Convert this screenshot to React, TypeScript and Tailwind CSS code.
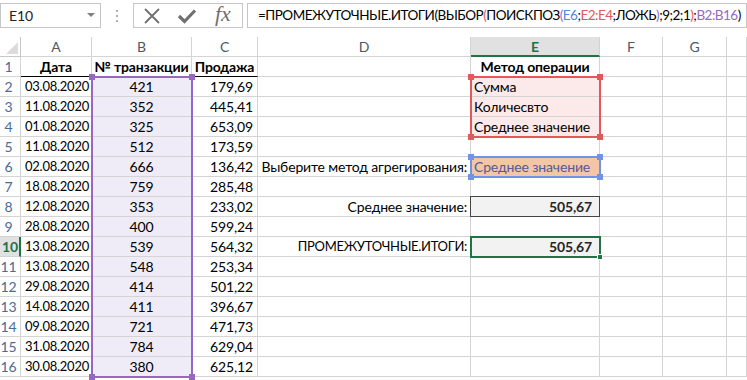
import React from "react";

const F = { fontFamily: 'Lato, "Noto Sans", sans-serif' };

const data: [string, string, string][] = [
  ["03.08.2020", "421", "179,69"],
  ["11.08.2020", "352", "445,41"],
  ["01.08.2020", "325", "653,09"],
  ["11.08.2020", "512", "173,59"],
  ["02.08.2020", "666", "136,42"],
  ["18.08.2020", "759", "285,48"],
  ["12.08.2020", "353", "233,02"],
  ["28.08.2020", "400", "599,24"],
  ["13.08.2020", "539", "564,32"],
  ["13.08.2020", "548", "253,34"],
  ["29.08.2020", "414", "501,22"],
  ["14.08.2020", "411", "396,67"],
  ["09.08.2020", "721", "471,73"],
  ["31.08.2020", "784", "629,04"],
  ["30.08.2020", "380", "625,12"],
];

const cell = "h-5 border-r border-b border-[#d4d4d4] flex items-center overflow-visible whitespace-nowrap";

function Handle({ cls, color }: { cls: string; color: string }) {
  return <div className={`absolute w-[6px] h-[6px] ${cls}`} style={{ background: color }} />;
}

function RangeBox({ left, top, width, height, color }: { left: number; top: number; width: number; height: number; color: string }) {
  return (
    <div className="absolute pointer-events-none" style={{ left, top, width, height, border: `2px solid ${color}` }}>
      <Handle cls="-left-[4px] -top-[4px]" color={color} />
      <Handle cls="-right-[4px] -top-[4px]" color={color} />
      <Handle cls="-left-[4px] -bottom-[4px]" color={color} />
      <Handle cls="-right-[4px] -bottom-[4px]" color={color} />
    </div>
  );
}

export default function App() {
  const dLabel = (r: number) =>
    r === 6 ? (
      "Выберите метод агрегирования:"
    ) : r === 8 ? (
      "Среднее значение:"
    ) : r === 10 ? (
      <span className="text-[13px] tracking-[-0.3px]">ПРОМЕЖУТОЧНЫЕ.ИТОГИ:</span>
    ) : (
      ""
    );
  const eVal = (r: number) => {
    if (r === 1) return <div className={`${cell} justify-center font-bold text-black`}>Метод операции</div>;
    if (r >= 2 && r <= 4)
      return (
        <div className={`${cell} bg-[#fce9e9] pl-[3px] text-black`}>
          {["Сумма", "Количесвто", "Среднее значение"][r - 2]}
        </div>
      );
    if (r === 6) return <div className={`${cell} bg-[#f2c6a6] pl-[3px] text-[#58579a]`}>Среднее значение</div>;
    if (r === 8 || r === 10)
      return (
        <div className="h-5 border-r border-b border-[#d4d4d4] relative">
          <div className="absolute -left-px -top-px w-[130px] h-[21px] border border-[#444] bg-[#f2f2f2] flex items-center justify-end pr-[7px] font-bold text-[#262626]">
            505,67
          </div>
        </div>
      );
    return <div className={cell} />;
  };

  return (
    <div className="w-[747px] h-[380px] overflow-hidden bg-white text-[14px] tracking-[-0.15px] text-black relative" style={F}>
      {/* toolbar */}
      <div className="h-[37px] flex items-start pt-[3px]">
        <div className="shrink-0 w-[101px] h-[25px] border border-[#c6c6c6] flex items-center justify-between pl-[8px] pr-[5px] text-[14px] text-[#222]">
          <span>E10</span>
          <svg width="8" height="5" viewBox="0 0 8 5"><path d="M0 0 L8 0 L4 4 Z" fill="#808080" /></svg>
        </div>
        <div className="shrink-0 w-[32px] h-[25px] flex flex-col items-center justify-center gap-[3px]">
          <div className="w-[2px] h-[2px] bg-[#b0b0b0]" />
          <div className="w-[2px] h-[2px] bg-[#b0b0b0]" />
          <div className="w-[2px] h-[2px] bg-[#b0b0b0]" />
        </div>
        <div className="shrink-0 w-[110px] h-[25px] border border-[#c6c6c6] flex items-center pl-[9px]">
          <svg width="18" height="18" viewBox="0 0 18 18" className="shrink-0">
            <path d="M2 2 L16 16 M16 2 L2 16" stroke="#707070" strokeWidth="1.8" />
          </svg>
          <svg width="20" height="18" viewBox="0 0 20 18" className="ml-[16px] shrink-0">
            <path d="M2 9 L7.5 14.5 L18 3.5" stroke="#707070" strokeWidth="3.2" fill="none" />
          </svg>
          <span
            className="ml-[18px] text-[22px] italic text-[#707070] leading-none -mt-[3px] tracking-normal"
            style={{ fontFamily: '"Liberation Serif", serif' }}
          >
            fx
          </span>
        </div>
        <div className="ml-[4px] flex-1 min-w-0 overflow-hidden h-[25px] border border-[#c6c6c6] flex items-center pl-[10px] text-[13.5px] tracking-[-0.5px] whitespace-nowrap text-black">
          <span>=ПРОМЕЖУТОЧНЫЕ.ИТОГИ(ВЫБОР</span>
          <span className="text-[#e2595c]">(</span>
          <span>ПОИСКПОЗ</span>
          <span className="text-[#8a6fd0]">(</span>
          <span className="text-[#5b82e6]">E6</span>
          <span>;</span>
          <span className="text-[#e2595c]">E2:E4</span>
          <span>;ЛОЖЬ</span>
          <span className="text-[#8a6fd0]">)</span>
          <span>;9;2;1</span>
          <span className="text-[#e2595c]">)</span>
          <span>;</span>
          <span className="text-[#9568c4]">B2:B16</span>
          <span>)</span>
        </div>
      </div>

      {/* grid */}
      <div className="relative">
        <div className="grid grid-cols-[21px_71px_100px_66px_213px_129px_63px_64px_1fr]">
          {/* header row */}
          <div className="h-5 border-r border-b border-[#c8c8c8] relative">
            <svg className="absolute right-[2px] bottom-[2px]" width="12" height="12" viewBox="0 0 12 12">
              <path d="M12 0 L12 12 L0 12 Z" fill="#dcdcdc" />
            </svg>
          </div>
          {["A", "B", "C", "D"].map((c) => (
            <div key={c} className="h-5 border-r border-b border-[#d4d4d4] flex items-center justify-center text-[#4d5866]">
              {c}
            </div>
          ))}
          <div className="h-5 border-r border-[#d4d4d4] border-b-2 border-b-[#217346] bg-[#e1e1e1] flex items-center justify-center font-bold text-[#217346]">
            E
          </div>
          {["F", "G", ""].map((c, i) => (
            <div key={i} className="h-5 border-r border-b border-[#d4d4d4] flex items-center justify-center text-[#4d5866]">
              {c}
            </div>
          ))}

          {Array.from({ length: 16 }, (_, i) => i + 1).map((r) => {
            const d = r >= 2 ? data[r - 2] : null;
            return (
              <React.Fragment key={r}>
                {r === 10 ? (
                  <div className="h-5 border-b border-[#d4d4d4] border-r-2 border-r-[#217346] bg-[#e1e1e1] flex items-center pl-[2px] font-bold text-[#217346]">
                    10
                  </div>
                ) : (
                  <div className="h-5 border-r border-b border-[#d4d4d4] flex items-center justify-center pr-[3px] text-[#4a6b96]">
                    {r}
                  </div>
                )}
                {r === 1 ? (
                  <>
                    <div className={`${cell} justify-center font-bold border-b-black`}>Дата</div>
                    <div className={`${cell} justify-center font-bold border-b-black`}>№ транзакции</div>
                    <div className={`${cell} justify-center font-bold border-b-black`}>Продажа</div>
                  </>
                ) : (
                  <>
                    <div className={`${cell} justify-center pl-[2px] text-[13px] tracking-[-0.25px]`}>{d![0]}</div>
                    <div className={`${cell} justify-center bg-[#f0ecf7]`}>{d![1]}</div>
                    <div className={`${cell} justify-end pr-[4px]`}>{d![2]}</div>
                  </>
                )}
                <div className={`${cell} justify-end pr-[3px]`}>{dLabel(r)}</div>
                {eVal(r)}
                <div className={cell} />
                <div className={cell} />
                <div className={cell} />
              </React.Fragment>
            );
          })}
        </div>

        {/* overlays */}
        <RangeBox left={91} top={39} width={102} height={302} color="#9568c4" />
        <RangeBox left={470} top={39} width={131} height={62} color="#e2595c" />
        <RangeBox left={470} top={119} width={131} height={22} color="#6f93e8" />
        <div className="absolute pointer-events-none border-2 border-[#217346]" style={{ left: 470, top: 199, width: 131, height: 22 }}>
          <div className="absolute -right-[4px] -bottom-[4px] w-[6px] h-[6px] bg-[#217346] border border-white" />
        </div>
      </div>
    </div>
  );
}
